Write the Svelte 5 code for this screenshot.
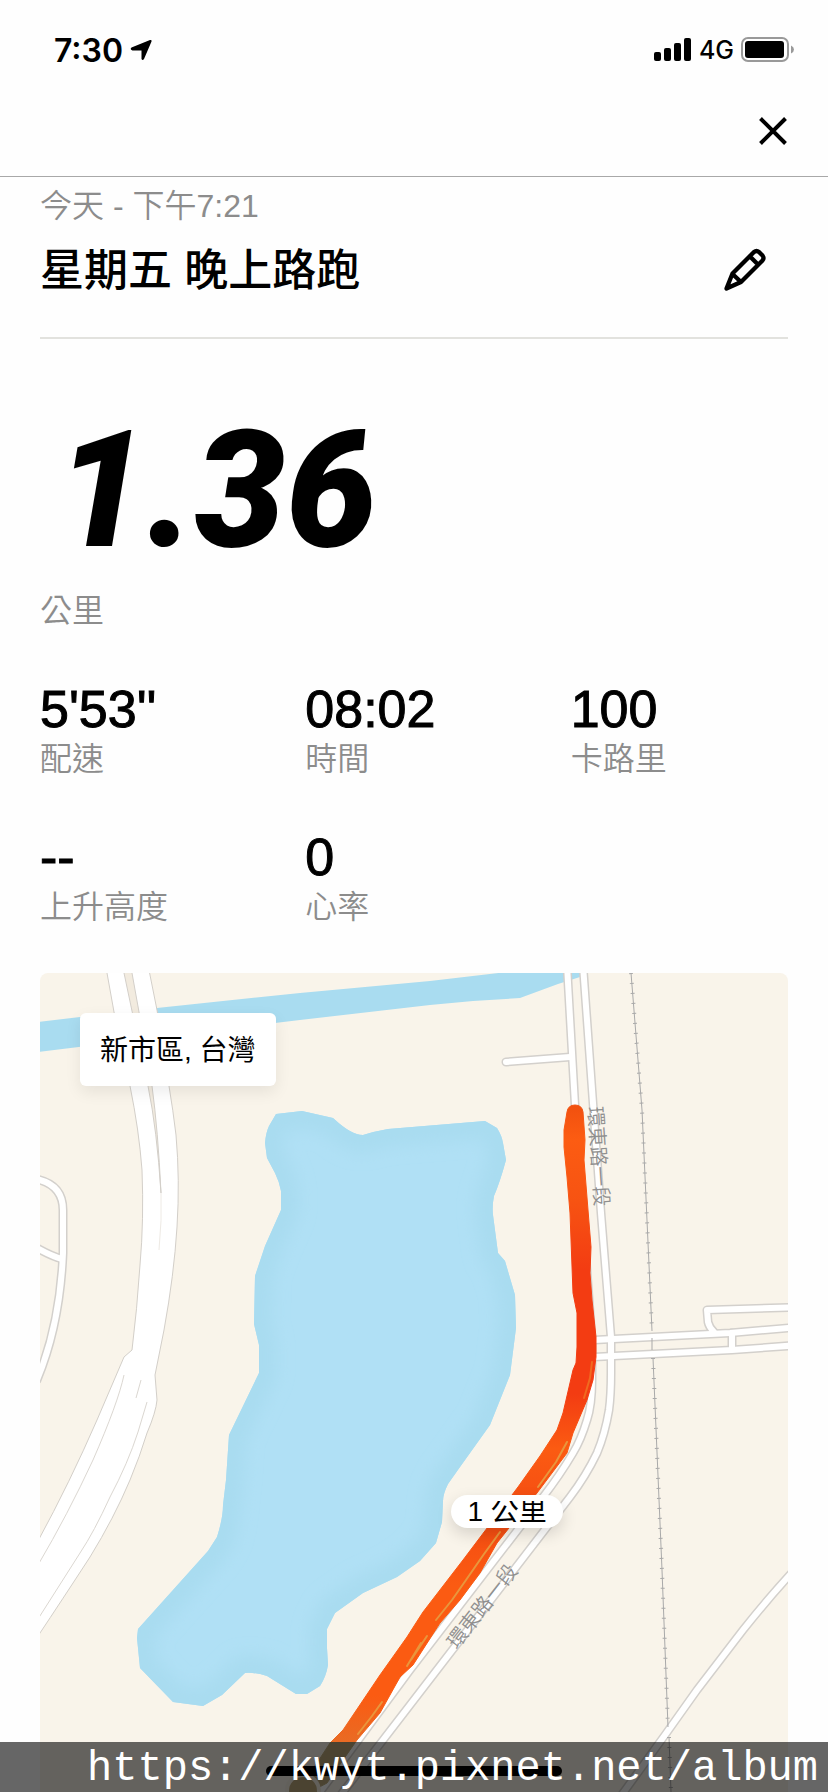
<!-- App.svelte -->
<script>
  let title = '星期五 晚上路跑';
  let startedAt = '今天 - 下午7:21';
  let distance = '1.36';
  let place = '新市區, 台灣';

  const stats = [
    { value: "5'53''", label: '配速' },
    { value: '08:02', label: '時間' },
    { value: '100', label: '卡路里' },
    { value: '--', label: '上升高度' },
    { value: '0', label: '心率' }
  ];

  const lake =
    'M276 1114L302 1111L333 1118Q344 1128 350 1131Q357 1135 363 1135Q376 1131 388 1129L485 1121L497 1128Q502 1136 503 1143L506 1160Q500 1182 494 1196Q492 1206 493 1215L498 1253L505 1261L515 1295L516 1328L510 1375L490 1425L460 1467L448 1484Q443 1494 443 1501L442 1522L436 1543L420 1561L397 1577L363 1593L335 1613L327 1629V1648L328 1665Q326 1677 320 1686L307 1694H296L267 1676Q254 1672 245 1673L222 1695L203 1706L173 1702L140 1668L137 1638L138 1629L208 1551L217 1537Q223 1518 223 1505L226 1480L229 1435L259 1373V1345L254 1324L255 1276L265 1246L281 1210V1191Q279 1181 275 1173L267 1158L265 1143Q266 1132 269 1126Z';

  // narrow roads, drawn twice: grey casing, then white on top
  const roads = [
    'M567 965L575 1105L592 1340V1380Q592 1405 587 1420Q581 1440 573 1453Q560 1475 543 1497L410 1670L320 1792L312 1803',
    'M583 965L593 1103L601 1213L611 1337V1373Q611 1395 609 1410Q605 1434 597 1453Q586 1476 570 1497L410 1705L343 1792L335 1803',
    'M506 1062L570 1057',
    'M594 1340L730 1333L800 1327',
    'M594 1357L732 1350L800 1345',
    'M732 1333V1349',
    'M800 1307L707 1310L708 1322Q709 1327 714 1332',
    'M30 1178Q63 1182 63 1210V1253Q60 1325 37 1380',
    'M30 1244Q50 1256 62 1259',
    'M798 1566Q770 1596 743 1630L697 1690L665 1735L618 1800'
  ];

  const highway =
    'M105 965L107 973L114 1012L130 1086Q139 1130 142 1170Q144 1220 140 1265Q137 1310 132 1350L124 1357L97 1420Q70 1482 38 1541V1636Q62 1600 90 1557Q114 1518 130 1480Q140 1456 147 1433Q156 1412 157 1400L155 1375L164 1330Q174 1275 177 1227Q180 1180 176 1135Q173 1110 169 1086L157 1010L148 965Z';

  const route =
    'M567 1112Q568 1105 575 1105Q582 1105 583 1112L585 1140L584 1160L588 1210L591 1247L590 1273L592 1300L596 1337V1357L593 1380L587 1400L573 1433L567 1453L537 1493L497 1543L480 1573L460 1600L440 1623L413 1665L400 1677L380 1713L357 1740L327 1783L310 1792L304 1780L317 1763L330 1743L343 1730L380 1675L407 1637L414 1626L423 1612L463 1560L518 1487L540 1456L557 1430L563 1413L573 1370L576 1363L577 1347V1313L573 1293L570 1213L567 1177L564 1147V1130Z';
</script>

<div class="page">
  <div class="status">
    <div class="clock">
      <span>7:30</span>
      <svg width="22" height="22" viewBox="0 0 22 22" aria-hidden="true">
        <path d="M1.500 8.500L20 1Q22 .5 21.500 2.500L14 20Q12.500 22 11.500 20V11.500H2.500Q-.5 10.500 1.500 8.500Z" />
      </svg>
    </div>
    <div class="signal">
      <svg width="38" height="24" viewBox="0 0 38 24" aria-hidden="true">
        <rect x="0" y="14" width="7" height="9" rx="2" />
        <rect x="10" y="10" width="7" height="13" rx="2" />
        <rect x="20" y="5" width="7" height="18" rx="2" />
        <rect x="30" y="0" width="7" height="23" rx="2" />
      </svg>
      <span>4G</span>
      <svg width="54" height="26" viewBox="0 0 54 26" aria-hidden="true">
        <rect x="1" y="1" width="46" height="23" rx="6" fill="none" stroke="#999" stroke-width="2" />
        <rect x="4" y="4" width="39" height="17" rx="3" />
        <path d="M50 8.500Q53 10 53 12.500T50 16.500Z" fill="#999" />
      </svg>
    </div>
  </div>

  <header>
    <button aria-label="關閉">
      <svg width="28" height="28" viewBox="0 0 28 28" aria-hidden="true">
        <path d="M1.500 1.500L26.500 26.500M26.500 1.500L1.500 26.500" fill="none" stroke="#000" stroke-width="4" />
      </svg>
    </button>
  </header>

  <main>
    <section class="heading">
      <div>
        <p class="muted">{startedAt}</p>
        <h1>{title}</h1>
      </div>
      <button aria-label="編輯">
        <svg width="44" height="44" viewBox="0 0 44 44" aria-hidden="true">
          <path
            d="M4.500 41.500L10.500 26.500L32 5Q34.500 3 37 5L40.500 8.500Q42.500 11 40.500 13.500L19 35ZM28 9.500L36 17.500M10.500 27L19 35"
            fill="none"
            stroke="#000"
            stroke-width="4.300"
            stroke-linejoin="round"
          />
        </svg>
      </button>
    </section>

    <section class="distance">
      <strong>{distance}</strong>
      <p class="muted">公里</p>
    </section>

    <dl>
      {#each stats as stat}
        <div>
          <dt class="muted">{stat.label}</dt>
          <dd>{stat.value}</dd>
        </div>
      {/each}
    </dl>

    <section class="map">
      <svg viewBox="40 973 748 819" aria-hidden="true">
        <defs>
          <clipPath id="lake-clip"><path d={lake} /></clipPath>
          <filter id="soft" x="-10%" y="-10%" width="120%" height="120%">
            <feGaussianBlur stdDeviation="8" />
          </filter>
          <linearGradient id="pace" gradientUnits="userSpaceOnUse" x1="0" y1="1105" x2="0" y2="1792">
            <stop offset="0" stop-color="#f1500f" />
            <stop offset=".05" stop-color="#fc5c12" />
            <stop offset=".14" stop-color="#f75312" />
            <stop offset=".24" stop-color="#f33c12" />
            <stop offset=".42" stop-color="#f33c12" />
            <stop offset=".5" stop-color="#fb5b12" />
            <stop offset=".6" stop-color="#f44b12" />
            <stop offset=".7" stop-color="#fb5b12" />
            <stop offset=".86" stop-color="#fb5b12" />
            <stop offset=".927" stop-color="#e96b24" />
            <stop offset=".928" stop-color="#bba97c" />
          </linearGradient>
        </defs>

        <rect x="40" y="973" width="748" height="819" fill="#f9f4ea" />
        <path d="M38 1022L80 1017L157 1008L300 993L430 981L507 972L590 972L580 977L558 984L520 998L473 1001L430 1005L300 1020L38 1052Z" fill="#a9dcf0" />

        <path d={lake} fill="#b0e0f5" />
        <g clip-path="url(#lake-clip)">
          <path d={lake} fill="none" stroke="#a9dcf0" stroke-width="36" filter="url(#soft)" />
        </g>

        <path d={highway} fill="#fff" stroke="#d3cfc9" />
        <path d="M122 965L124 973L132 1011L148 1086Q157 1130 161 1193Q158 1130 152 1086L139 1012L132 973L130 965Z" fill="#f2ebdf" stroke="#d3cfc9" />
        <path d="M161 1193Q162 1220 159 1250" fill="none" stroke="#eeeae4" />
        <path
          d="M124 1375Q118 1403 93 1460Q68 1514 38 1565M141 1380L136 1398M147 1402L138 1432Q128 1463 110 1497Q94 1532 80 1553L38 1619"
          fill="none"
          stroke="#dbd7d1"
        />

        {#each roads as d}
          <path class="casing" {d} />
        {/each}
        {#each roads as d}
          <path class="road" {d} />
        {/each}

        <g fill="none" stroke="#a9a9a9">
          <path d="M631 973L642 1110L652 1331M652 1338V1350M653 1358L662 1570L668 1727M669 1737L671 1792" />
          <path
            d="M631 973L642 1110L652 1331M653 1358L662 1570L668 1727M669 1737L671 1792"
            stroke-width="4"
            stroke-dasharray="1 9"
          />
        </g>

        <path d={route} fill="url(#pace)" stroke="url(#pace)" />
        <g fill="none" stroke="#e9963c" stroke-width="2" stroke-linecap="round">
          <path d="M592 1362L590 1378L584 1398" stroke="#f06a20" />
          <path d="M567 1442L556 1462L538 1487" />
          <path d="M500 1532L484 1554L466 1580L452 1600L436 1620" />
          <path d="M427 1636L411 1660M421 1643L407 1666" />
          <path d="M382 1702L372 1716L358 1734" />
        </g>
        <circle cx="303" cy="1791" r="16" fill="#bba97c" stroke="#f5efe4" stroke-width="4" />

        <text transform="translate(588 1107) rotate(86)">環東路一段</text>
        <text transform="translate(457 1650) rotate(-52)">環東路一段</text>
      </svg>

      <p class="place">{place}</p>
      <p class="marker"><span>1 公里</span></p>
    </section>
  </main>

  <div class="home"></div>
  <footer>https://kwyt.pixnet.net/album</footer>
</div>

<style>
  :global(body) {
    margin: 0;
    background: #fefefe;
  }

  .page {
    position: relative;
    overflow: hidden;
    color: #000;
    font-family: "Liberation Sans", "Noto Sans CJK TC", sans-serif;
  }

  p,
  h1,
  dl,
  dd {
    margin: 0;
  }

  svg {
    display: block;
  }

  button {
    padding: 0;
    border: none;
    background: none;
    cursor: pointer;
  }

  .status {
    display: flex;
    justify-content: space-between;
    align-items: center;
    height: 100px;
    padding: 0 33px 0 54px;
    font-family: Inter, sans-serif;
  }

  .clock,
  .signal {
    display: flex;
    align-items: center;
    gap: 7px;
  }

  .clock {
    font-size: 32px;
    font-weight: 600;
  }

  .signal {
    font-size: 25px;
    font-weight: 500;
  }

  header {
    display: flex;
    justify-content: flex-end;
    padding: 17px 41px 31px;
    border-bottom: 1px solid #a8a8a8;
  }

  main {
    padding: 0 40px;
  }

  .muted {
    color: #8c8c8c;
    font-size: 32px;
    font-weight: 350;
    line-height: 44px;
  }

  .heading {
    display: flex;
    justify-content: space-between;
    align-items: flex-end;
    padding: 7px 22px 38px 0;
    border-bottom: 2px solid #e2e2de;
  }

  .heading button {
    margin-bottom: 8px;
  }

  h1 {
    margin-top: 15px;
    font-size: 44px;
    font-weight: 500;
    line-height: 56px;
  }

  .distance {
    padding-top: 72px;
  }

  .distance strong {
    display: block;
    padding-left: 16px;
    font-family: Roboto, sans-serif;
    font-size: 162px;
    font-style: italic;
    font-weight: 900;
    line-height: 160px;
  }

  .distance p {
    margin-top: 18px;
  }

  dl {
    display: grid;
    grid-template-columns: repeat(3, 1fr);
    gap: 48px;
    margin-top: 48px;
  }

  dl div {
    display: flex;
    flex-direction: column-reverse;
  }

  dd {
    font-size: 52px;
    line-height: 56px;
    -webkit-text-stroke: 1px #000;
  }

  .map {
    position: relative;
    margin-top: 44px;
    border-radius: 8px 8px 0 0;
    overflow: hidden;
  }

  .map svg {
    width: 100%;
  }

  .map path {
    stroke-linejoin: round;
  }

  .map .casing {
    fill: none;
    stroke: #d3d0cc;
    stroke-width: 9;
    stroke-linecap: round;
  }

  .map .road {
    fill: none;
    stroke: #fff;
    stroke-width: 6;
    stroke-linecap: round;
  }

  .map text {
    fill: #8f8f8f;
    font-size: 20px;
    font-weight: 350;
  }

  .place {
    position: absolute;
    top: 40px;
    left: 40px;
    padding: 3px 20px 0;
    border-radius: 6px;
    background: #fff;
    box-shadow: 0 6px 16px rgba(0, 0, 0, 0.08);
    font-size: 28px;
    line-height: 70px;
  }

  .marker {
    position: absolute;
    top: 63.7%;
    left: 55%;
    padding: 6px 16px;
    border-radius: 17px;
    background: #fff;
    box-shadow: 0 6px 16px rgba(0, 0, 0, 0.14);
    font-size: 28px;
  }

  .marker span {
    display: block;
    height: 21px;
    overflow: hidden;
    line-height: 21px;
  }

  .home {
    position: absolute;
    bottom: 16px;
    left: 50%;
    width: 296px;
    height: 10px;
    margin-left: -148px;
    border-radius: 5px;
    background: #000;
  }

  footer {
    position: absolute;
    right: 0;
    bottom: 0;
    left: 0;
    padding: 4px 10px 0 0;
    background: rgba(0, 0, 0, 0.6);
    color: #fff;
    font-family: "Liberation Mono", monospace;
    font-size: 42px;
    line-height: 46px;
    text-align: right;
  }
</style>
